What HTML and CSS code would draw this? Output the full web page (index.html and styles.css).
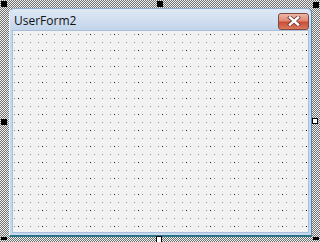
FILE: index.html
```html
<!DOCTYPE html>
<html lang="en">
<head>
    <meta charset="UTF-8">
    <title>UserForm2</title>
    <link rel="stylesheet" href="styles.css">
</head>
<body>
    <div class="designer">
        <!-- Tutacaqlar -->
        <span class="handle tl"></span>
        <span class="handle tm"></span>
        <span class="handle tr"></span>
        <span class="handle ml"></span>
        <span class="handle mr open"></span>
        <span class="handle bl"></span>
        <span class="handle bm open"></span>
        <span class="handle br"></span>

        <div class="form">
            <div class="titlebar">
                <span class="caption">UserForm2</span>
                <span class="close-btn">
                    <svg width="14" height="10" viewBox="0 0 14 10">
                        <path d="M3 1.5 L11 8.5 M11 1.5 L3 8.5" stroke="#6b3a32" stroke-width="4" stroke-linecap="square"/>
                        <path d="M3 1.5 L11 8.5 M11 1.5 L3 8.5" stroke="#fff" stroke-width="2.4" stroke-linecap="square"/>
                    </svg>
                </span>
            </div>
            <div class="client"></div>
        </div>
    </div>
</body>
</html>
```

FILE: styles.css
```css
/* Ümumi ayarlar */
body {
    margin: 0;
    padding: 0;
    font-family: "Open Sans", "Noto Sans", sans-serif;
}

/* Seçim çərçivəsi */
.designer {
    position: relative;
    width: 320px;
    height: 242px;
    box-sizing: border-box;
    padding: 8px 8px 5px 9px;
    background: repeating-conic-gradient(#6e6e6e 0 25%, #f2f2f2 0 50%) 0 0 / 2px 2px;
}

.handle {
    position: absolute;
    width: 4px;
    height: 4px;
    background: #000;
    border: 1px solid #000;
}

.handle.open {
    background: #fff;
}

.tl { left: 1px; top: 1px; }
.tm { left: 157px; top: 1px; }
.tr { left: 313px; top: 2px; }
.ml { left: 1px; top: 119px; }
.mr { left: 312px; top: 118px; }
.bl { left: 1px; top: 237px; height: 1px; }
.bm { left: 156px; top: 236px; height: 8px; }
.br { left: 313px; top: 237px; height: 1px; }

/* Forma */
.form {
    height: 100%;
    box-sizing: border-box;
    display: flex;
    flex-direction: column;
    background: #c6d8ed;
    border-top: 1px solid #8fabcb;
    border-left: 1px solid #e4edf7;
    border-right: 1px solid #4f8db0;
    border-bottom: 2px solid #2a7585;
    border-radius: 5px 5px 0 0;
    padding: 0 2px 2px 2px;
}

.titlebar {
    height: 21px;
    display: flex;
    align-items: center;
    justify-content: space-between;
    background: linear-gradient(#dfe9f5, #c3d5eb);
    margin: 0 -2px;
    padding: 0 2px 0 4px;
    border-radius: 5px 5px 0 0;
}

.caption {
    font-size: 12px;
    color: #111;
    margin-top: 1px;
}

.close-btn {
    width: 29px;
    height: 15px;
    margin-top: 3px;
    display: flex;
    align-items: center;
    justify-content: center;
    border: 1px solid #7e4a40;
    border-radius: 3px;
    background: linear-gradient(#efb6a6 0%, #df8a74 45%, #c84d36 55%, #d97a5e 100%);
}

.client {
    flex: 1;
    border: 1px solid #a9bfd8;
    background-color: #f2f2f2;
    background-image:
        radial-gradient(circle at 0.5px 0.5px, #111 0.8px, transparent 0.8px),
        radial-gradient(circle at 0.5px 0.5px, #8c8c8c 0.8px, transparent 0.8px);
    background-size: 24px 16px, 8px 8px;
    background-position: 5px 3px, 1px 3px;
}
```
